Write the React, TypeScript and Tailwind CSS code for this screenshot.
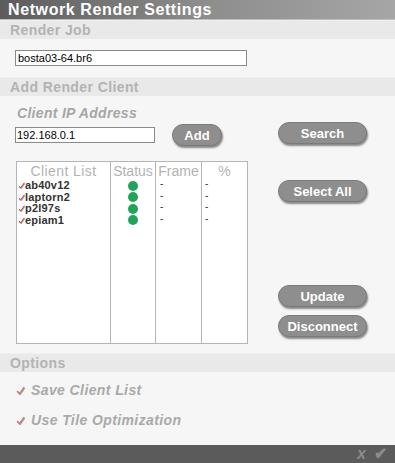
const font = { fontFamily: '"Liberation Sans", Arial, sans-serif' };

function Check({ faded, size = 9 }: { faded?: boolean; size?: number }) {
  return (
    <svg width={size} height={size} viewBox="0 0 9 9" className="shrink-0">
      <path d="M1 5 L3.5 7.5 L8 1" fill="none" stroke="#9a9a9a" strokeWidth="1.6" transform="translate(0.6,0.8)" />
      <path d="M1 5 L3.5 7.5 L8 1" fill="none" stroke={faded ? '#d27a7a' : '#d23c3c'} strokeWidth="1.2" />
    </svg>
  );
}

function PillButton({ label, className = '' }: { label: string; className?: string }) {
  return (
    <button
      className={`h-[22px] rounded-full bg-[#8e8e8e] text-white font-bold text-[13px] leading-none shadow-[1px_2px_2px_rgba(0,0,0,0.45)] border border-[#7a7a7a] ${className}`}
    >
      {label}
    </button>
  );
}

function SectionHeader({ title }: { title: string }) {
  return (
    <div className="h-[19px] bg-[#e9e9e9] flex items-center pl-[10px] border-t border-[#f0f0f0]">
      <span className="text-[14px] font-bold text-[#b3b3b3] leading-none tracking-[0.4px]">{title}</span>
    </div>
  );
}

const clients = ['ab40v12', 'laptorn2', 'p2l97s', 'epiam1'];

export default function App() {
  return (
    <div className="w-[395px] h-[463px] bg-[#f6f6f6] flex flex-col overflow-hidden" style={font}>
      <div className="h-[20px] bg-gradient-to-r from-[#5c5c5c] via-[#8c8c8c] to-[#a6a6a6] flex items-center pl-[8px] border-b border-[#bdbdbd]">
        <span className="text-white font-bold text-[16px] leading-none tracking-[0.6px]">Network Render Settings</span>
      </div>

      <SectionHeader title="Render Job" />
      <div className="h-[38px] pl-[15px] pt-[11px]">
        <div className="w-[232px] h-[16px] bg-white border border-[#8a8a8a] text-[11px] text-black leading-[14px] pl-[2px]">
          bosta03-64.br6
        </div>
      </div>

      <SectionHeader title="Add Render Client" />
      <div className="h-[257px] flex">
        <div className="ml-[15px] w-[233px] flex flex-col">
          <div className="mt-[8px] pl-[2px] text-[14px] italic font-bold text-[#a6a6a6] leading-[18px] tracking-[0.3px]">Client IP Address</div>
          <div className="mt-[2px] flex items-center">
            <div className="w-[140px] h-[16px] bg-white border border-[#8a8a8a] text-[11px] text-black leading-[14px] pl-[1px]">
              192.168.0.1
            </div>
            <PillButton label="Add" className="ml-[17px] w-[50px]" />
          </div>
          <div className="mt-[15px] ml-[1px] w-[232px] h-[183px] bg-white border border-[#b5b5b5] flex">
            <div className="w-[94px] border-r border-[#b5b5b5] flex flex-col">
              <div className="h-[18px] text-center text-[14px] text-[#b3b3b3] leading-[18px] tracking-[0.4px]">Client List</div>
              {clients.map((c) => (
                <div key={c} className="h-[11.5px] flex items-center gap-[0px] pl-[1px]">
                  <Check size={7} />
                  <span className="text-[11px] font-bold text-[#333] leading-none tracking-[0.2px]">{c}</span>
                </div>
              ))}
            </div>
            <div className="w-[45px] border-r border-[#b5b5b5] flex flex-col items-center">
              <div className="h-[18px] text-[14px] text-[#b3b3b3] leading-[18px]">Status</div>
              {clients.map((c) => (
                <div key={c} className="h-[11.5px] flex items-center">
                  <div className="w-[10px] h-[10px] rounded-full bg-[#1fa55a]" />
                </div>
              ))}
            </div>
            <div className="w-[46px] border-r border-[#b5b5b5] flex flex-col">
              <div className="h-[18px] text-center text-[14px] text-[#b3b3b3] leading-[18px]">Frame</div>
              {clients.map((c) => (
                <div key={c} className="h-[11.5px] pl-[4px] text-[10px] leading-[8px] text-[#333]">-</div>
              ))}
            </div>
            <div className="flex-1 flex flex-col">
              <div className="h-[18px] text-center text-[14px] text-[#b3b3b3] leading-[18px]">%</div>
              {clients.map((c) => (
                <div key={c} className="h-[11.5px] pl-[3px] text-[10px] leading-[8px] text-[#333]">-</div>
              ))}
            </div>
          </div>
        </div>
        <div className="ml-[30px] w-[89px] flex flex-col">
          <PillButton label="Search" className="mt-[26px] w-full" />
          <PillButton label="Select All" className="mt-[36px] w-full" />
          <PillButton label="Update" className="mt-[83px] w-full" />
          <PillButton label="Disconnect" className="mt-[8px] w-full" />
        </div>
      </div>

      <SectionHeader title="Options" />
      <div className="flex-1 flex flex-col pl-[16px] pt-[10px] gap-[14px]">
        <div className="flex items-center gap-[6px] h-[16px]">
          <Check faded />
          <span className="text-[14px] italic font-bold text-[#a9a9a9] tracking-[0.4px]">Save Client List</span>
        </div>
        <div className="flex items-center gap-[6px] h-[16px]">
          <Check faded />
          <span className="text-[14px] italic font-bold text-[#a9a9a9] tracking-[0.4px]">Use Tile Optimization</span>
        </div>
      </div>

      <div className="h-[18px] bg-[#5b5b5b] flex items-center justify-end gap-[8px] pr-[8px]">
        <span className="text-[#8c8c8c] font-bold italic text-[16px] leading-none">x</span>
        <span className="text-[#8c8c8c] font-bold text-[16px] leading-none">✔</span>
      </div>
    </div>
  );
}
